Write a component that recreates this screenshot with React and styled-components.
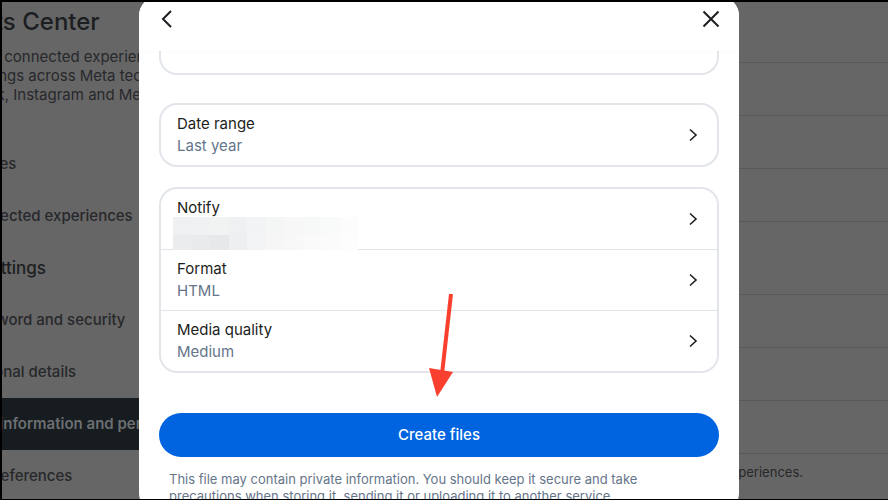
import React from 'react';
import styled, { createGlobalStyle } from 'styled-components';

const GlobalStyle = createGlobalStyle`
  *, *::before, *::after { box-sizing: border-box; }
  html, body { margin: 0; padding: 0; background: #000; }
  body { font-family: Inter, "Noto Sans", sans-serif; overflow: hidden; }
`;

// --- Page behind the dialog ---
const Screen = styled.div`
  position: relative;
  margin: 2px 0 0 2px;
  height: 497px;
  display: flex;
  overflow: hidden;
  background: #666;
  color: #1c1e21;
`;

const Sidebar = styled.aside`
  flex: none;
  width: 380px;
  margin-left: -95px;
`;

const Title = styled.h1`
  margin: 0;
  height: 40px;
  font-size: 24px;
  line-height: 40px;
  font-weight: 500;
  white-space: nowrap;
`;

const Intro = styled.p`
  margin: 5px 0 34px;
  font-size: 15px;
  line-height: 19px;
  color: #26282b;
  white-space: nowrap;
`;

const NavItem = styled.div`
  height: 52px;
  padding: 0 0 1px 55px;
  display: flex;
  align-items: center;
  font-size: 15px;
  font-weight: ${(p) => (p.$active ? 600 : 500)};
  white-space: nowrap;
  background: ${(p) => (p.$active ? '#161c20' : 'transparent')};
  color: ${(p) => (p.$active ? '#6c6f71' : '#26282b')};
`;

const NavHeading = styled.div`
  height: 52px;
  padding-left: 2px;
  display: flex;
  align-items: center;
  font-size: 17px;
  font-weight: 500;
  white-space: nowrap;
`;

const Main = styled.main`
  flex: 1;
  min-width: 0;
`;

const MainRow = styled.div`
  height: ${(p) => p.$height || 53}px;
  border-bottom: 1px solid #585858;
`;

const MainNote = styled.div`
  height: 36px;
  padding-right: 85px;
  display: flex;
  align-items: center;
  justify-content: flex-end;
  font-size: 13px;
  color: #26282b;
`;

// --- Dialog ---
const Dialog = styled.section`
  position: absolute;
  top: -6px;
  left: 137px;
  bottom: -14px;
  width: 600px;
  display: flex;
  flex-direction: column;
  overflow: hidden;
  background: #fff;
  border-radius: 20px;
`;

const DialogHeader = styled.header`
  flex: none;
  height: 55px;
  padding: 6px 18px 0 20px;
  display: flex;
  align-items: flex-start;
  justify-content: space-between;
  background: #fff;
  box-shadow: 0 1px 3px rgba(0, 0, 0, 0.02);
  position: relative;
  z-index: 1;
`;

const HeaderIcon = styled.svg`
  display: block;
  margin-top: 7px;
  fill: none;
  stroke: #1c1e21;
  stroke-width: 2;
`;

const DialogBody = styled.div`
  padding: 0 20px;
`;

const ClippedCard = styled.div`
  height: 24px;
  border: 2px solid #e2e5ea;
  border-top: 0;
  border-radius: 0 0 18px 18px;
  margin-bottom: 28px;
`;

const Card = styled.div`
  border: 2px solid #e2e5ea;
  border-radius: 18px;
  margin-bottom: ${(p) => p.$gap}px;
`;

const Row = styled.div`
  height: ${(p) => p.$height}px;
  padding: 0 19px 0 16px;
  display: flex;
  align-items: center;
  justify-content: space-between;
  & + & { border-top: 1px solid #e2e5ea; }
`;

const RowText = styled.div`
  margin-top: -2px;
  display: flex;
  flex-direction: column;
  gap: 3px;
`;

const RowLabel = styled.span`
  font-size: 15px;
  line-height: 19px;
  color: #1c1e21;
`;

const RowValue = styled.span`
  font-size: 15px;
  line-height: 19px;
  color: #65758a;
`;

const Blurred = styled.div`
  position: relative;
  z-index: 1;
  width: 185px;
  height: 33px;
  margin: -3px 0 -11px -4px;
  display: grid;
  grid-template-columns: repeat(10, 1fr);
  grid-template-rows: 18px 15px;
`;

const BlurCell = styled.div`
  background: ${(p) => p.$color};
`;

const Chevron = styled.svg`
  flex: none;
  fill: none;
  stroke: #1c1e21;
  stroke-width: 1.6;
`;

const PrimaryButton = styled.button`
  display: block;
  width: 100%;
  height: 44px;
  padding: 0 0 2px;
  border: 0;
  border-radius: 22px;
  background: #0064e0;
  color: #fff;
  font: 500 15px Inter, sans-serif;
`;

const Footnote = styled.p`
  margin: 14px 10px 0;
  font-size: 13px;
  line-height: 17px;
  color: #65758a;
`;

const Annotation = styled.svg`
  position: absolute;
  left: 425px;
  top: 290px;
`;

const blurColors = [
  '#eff0f1', '#f0f1f2', '#f1f2f2', '#eff0f2', '#f2f3f4', '#f4f5f5', '#f7f7f8', '#f7f8f8', '#f9fafa', '#fcfcfc',
  '#ebeced', '#e9eaeb', '#e7e8e9', '#eeeff0', '#f3f4f5', '#f6f6f7', '#f8f8f9', '#fafafa', '#fbfbfb', '#fdfdfd',
];

const RowChevron = () => (
  <Chevron width="10" height="14" viewBox="0 0 10 14">
    <path d="M2 1.5 L8 7 L2 12.5" />
  </Chevron>
);

function App() {
  return (
    <>
      <GlobalStyle />
      <Screen>
        <Sidebar>
          <Title>Accounts Center</Title>
          <Intro>
            Manage your connected experiences and
            <br />
            account settings across Meta technologies,
            <br />
            like Facebook, Instagram and Meta Horizon.
          </Intro>
          <NavItem>Profiles</NavItem>
          <NavItem>Connected experiences</NavItem>
          <NavHeading>Account settings</NavHeading>
          <NavItem>Password and security</NavItem>
          <NavItem>Personal details</NavItem>
          <NavItem $active>Your information and permissions</NavItem>
          <NavItem>Ad preferences</NavItem>
        </Sidebar>
        <Main>
          <MainRow $height={61} />
          <MainRow />
          <MainRow />
          <MainRow />
          <MainRow $height={73} />
          <MainRow />
          <MainRow />
          <MainRow />
          <MainNote>Manage your ad experiences.</MainNote>
        </Main>

        <Dialog>
          <DialogHeader>
            <HeaderIcon width="16" height="20" viewBox="0 0 16 20">
              <path d="M12 2 L4 10 L12 18" />
            </HeaderIcon>
            <HeaderIcon width="20" height="20" viewBox="0 0 20 20">
              <path d="M2.5 2.5 L17.5 17.5 M17.5 2.5 L2.5 17.5" />
            </HeaderIcon>
          </DialogHeader>
          <DialogBody>
            <ClippedCard />
            <Card $gap={20}>
              <Row $height={60}>
                <RowText>
                  <RowLabel>Date range</RowLabel>
                  <RowValue>Last year</RowValue>
                </RowText>
                <RowChevron />
              </Row>
            </Card>
            <Card $gap={40}>
              <Row $height={60}>
                <RowText>
                  <RowLabel>Notify</RowLabel>
                  <Blurred>
                    {blurColors.map((color, index) => (
                      <BlurCell key={index} $color={color} />
                    ))}
                  </Blurred>
                </RowText>
                <RowChevron />
              </Row>
              <Row $height={61}>
                <RowText>
                  <RowLabel>Format</RowLabel>
                  <RowValue>HTML</RowValue>
                </RowText>
                <RowChevron />
              </Row>
              <Row $height={61}>
                <RowText>
                  <RowLabel>Media quality</RowLabel>
                  <RowValue>Medium</RowValue>
                </RowText>
                <RowChevron />
              </Row>
            </Card>
            <PrimaryButton>Create files</PrimaryButton>
            <Footnote>
              This file may contain private information. You should keep it secure and take
              precautions when storing it, sending it or uploading it to another service.
            </Footnote>
          </DialogBody>
        </Dialog>

        <Annotation width="40" height="110" viewBox="0 0 40 110">
          <path d="M24 2 L15 82" stroke="#f9402f" strokeWidth="4" />
          <path d="M2 76 L26 80 L10 105 Z" fill="#f9402f" />
        </Annotation>
      </Screen>
    </>
  );
}

export default App;
